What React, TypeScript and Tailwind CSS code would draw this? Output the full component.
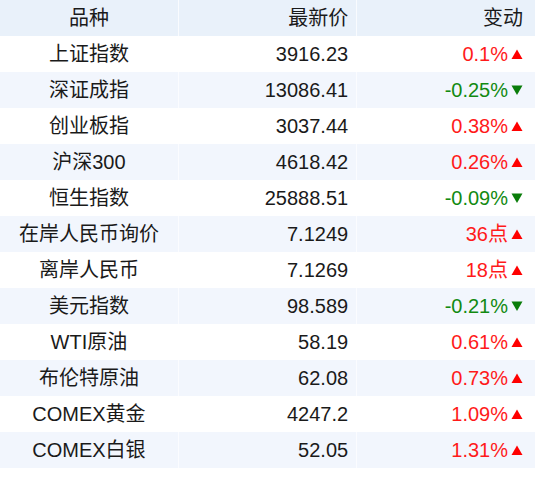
import React from 'react';

interface Quote {
  name: string;
  price: string;
  change: string;
  up: boolean;
}

const quotes: Quote[] = [
  { name: '上证指数', price: '3916.23', change: '0.1%', up: true },
  { name: '深证成指', price: '13086.41', change: '-0.25%', up: false },
  { name: '创业板指', price: '3037.44', change: '0.38%', up: true },
  { name: '沪深300', price: '4618.42', change: '0.26%', up: true },
  { name: '恒生指数', price: '25888.51', change: '-0.09%', up: false },
  { name: '在岸人民币询价', price: '7.1249', change: '36点', up: true },
  { name: '离岸人民币', price: '7.1269', change: '18点', up: true },
  { name: '美元指数', price: '98.589', change: '-0.21%', up: false },
  { name: 'WTI原油', price: '58.19', change: '0.61%', up: true },
  { name: '布伦特原油', price: '62.08', change: '0.73%', up: true },
  { name: 'COMEX黄金', price: '4247.2', change: '1.09%', up: true },
  { name: 'COMEX白银', price: '52.05', change: '1.31%', up: true },
];

const Arrow: React.FC<{ up: boolean }> = ({ up }) => (
  <svg width="12" height="11" viewBox="0 0 12 11" className="ml-[3px] shrink-0">
    {up ? (
      <polygon points="6,0.5 11.5,10 0.5,10" fill="#ff0000" />
    ) : (
      <polygon points="0.5,0.5 11.5,0.5 6,10" fill="#0a7d0a" />
    )}
  </svg>
);

export default function App() {
  return (
    <div className="w-[535px] h-[480px] bg-white font-['Liberation_Sans','Noto_Sans_CJK_SC',sans-serif] text-[20px] text-[#1a1a1a]">
      <table className="w-full table-fixed border-collapse">
        <thead>
          <tr className="h-9 bg-[#e9f1fa]">
            <th className="font-normal text-center border-r border-white/70">品种</th>
            <th className="font-normal text-right pr-2 border-r border-white/70">最新价</th>
            <th className="font-normal text-right pr-3">变动</th>
          </tr>
        </thead>
        <tbody>
          {quotes.map((q, i) => (
            <tr key={q.name} className={`h-9 ${i % 2 === 1 ? 'bg-[#f2f6fd]' : 'bg-white'}`}>
              <td className="text-center border-r border-white/70">{q.name}</td>
              <td className="text-right pr-2 border-r border-white/70">{q.price}</td>
              <td className="pr-3">
                <div className={`flex items-center justify-end ${q.up ? 'text-[#ff1a1a]' : 'text-[#118a11]'}`}>
                  <span>{q.change}</span>
                  <Arrow up={q.up} />
                </div>
              </td>
            </tr>
          ))}
        </tbody>
      </table>
    </div>
  );
}
